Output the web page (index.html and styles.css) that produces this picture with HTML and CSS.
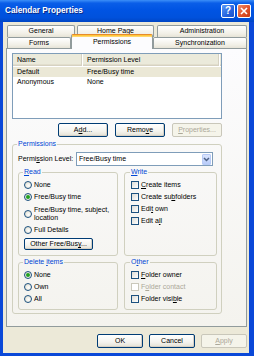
FILE: index.html
```html
<!DOCTYPE html>
<html lang="en">
<head>
<meta charset="UTF-8">
<title>Calendar Properties</title>
<link rel="stylesheet" href="styles.css">
</head>
<body>

<div class="window">
    <div class="titlebar">
        <span class="title">Calendar Properties</span>
        <span class="cap-btn help-btn">?</span>
        <span class="cap-btn close-btn">
            <svg width="8" height="8" viewBox="0 0 8 8"><path d="M1 1 L7 7 M7 1 L1 7" stroke="#fff" stroke-width="1.6"/></svg>
        </span>
    </div>

    <div class="frame">
        <div class="tab-row back-row">
            <div class="tab tab-general">General</div>
            <div class="tab tab-home">Home Page</div>
            <div class="tab tab-admin">Administration</div>
        </div>
        <div class="tab-row">
            <div class="tab tab-forms">Forms</div>
            <div class="tab tab-perm active">Permissions</div>
            <div class="tab tab-sync">Synchronization</div>
        </div>

        <div class="panel">
            <div class="listview">
                <div class="lv-head">
                    <span class="col-name">Name</span>
                    <span class="col-level">Permission Level</span>
                </div>
                <div class="lv-row selected">
                    <span class="col-name">Default</span>
                    <span class="col-level">Free/Busy time</span>
                </div>
                <div class="lv-row">
                    <span class="col-name">Anonymous</span>
                    <span class="col-level">None</span>
                </div>
            </div>

            <div class="btn-row">
                <button class="btn">A<u>d</u>d...</button>
                <button class="btn">Remo<u>v</u>e</button>
                <button class="btn" disabled><u>P</u>roperties...</button>
            </div>

            <fieldset class="group outer">
                <legend>Permissions</legend>
                <div class="level-row">
                    <span class="level-label">Permi<u>s</u>sion Level:</span>
                    <div class="combo">
                        <span class="combo-text">Free/Busy time</span>
                        <span class="combo-btn">
                            <svg width="7" height="5" viewBox="0 0 7 5"><path d="M1 1 L3.5 3.5 L6 1" stroke="#4d6185" stroke-width="1.5" fill="none"/></svg>
                        </span>
                    </div>
                </div>

                <div class="sub-grid">
                    <fieldset class="group">
                        <legend><u>R</u>ead</legend>
                        <div class="item"><span class="radio"></span><span>None</span></div>
                        <div class="item"><span class="radio checked"></span><span>Free/Busy time</span></div>
                        <div class="item two-line"><span class="radio"></span><span>Free/Busy time, subject,<br>location</span></div>
                        <div class="item"><span class="radio"></span><span>Full Details</span></div>
                        <button class="btn btn-other">Other Free/Bus<u>y</u>...</button>
                    </fieldset>

                    <fieldset class="group">
                        <legend><u>W</u>rite</legend>
                        <div class="item"><span class="check"></span><span><u>C</u>reate items</span></div>
                        <div class="item"><span class="check"></span><span>Create su<u>b</u>folders</span></div>
                        <div class="item"><span class="check"></span><span>Edi<u>t</u> own</span></div>
                        <div class="item"><span class="check"></span><span>Edit a<u>l</u>l</span></div>
                    </fieldset>

                    <fieldset class="group">
                        <legend>Delete <u>i</u>tems</legend>
                        <div class="item"><span class="radio checked"></span><span>None</span></div>
                        <div class="item"><span class="radio"></span><span>Own</span></div>
                        <div class="item"><span class="radio"></span><span>All</span></div>
                    </fieldset>

                    <fieldset class="group">
                        <legend>O<u>t</u>her</legend>
                        <div class="item"><span class="check"></span><span><u>F</u>older owner</span></div>
                        <div class="item disabled"><span class="check"></span><span>F<u>o</u>lder contact</span></div>
                        <div class="item"><span class="check"></span><span>Folder visi<u>b</u>le</span></div>
                    </fieldset>
                </div>
            </fieldset>
        </div>

        <div class="dlg-buttons">
            <button class="btn btn-dlg">OK</button>
            <button class="btn btn-dlg">Cancel</button>
            <button class="btn btn-dlg" disabled><u>A</u>pply</button>
        </div>
    </div>
</div>

</body>
</html>
```

FILE: styles.css
```css
* {
    box-sizing: border-box;
}

body {
    margin: 0;
    font-family: "Liberation Sans", Arial, sans-serif;
    font-size: 7px;
    line-height: 8px;
    color: #000;
    background: #fff;
}

.window {
    width: 254px;
    height: 356px;
    display: flex;
    flex-direction: column;
}

/* title bar */
.titlebar {
    height: 22px;
    display: flex;
    align-items: center;
    padding: 0 3px 0 5px;
    background: linear-gradient(to bottom, #3c8ff8 0%, #0a5ee8 14%, #0054e3 45%, #0051dc 80%, #0046c4 100%);
}

.title {
    flex: 1;
    color: #fff;
    font-weight: bold;
    font-size: 8.2px;
    text-shadow: 1px 1px 0 #0a2a8a;
    margin-top: -1px;
}

.cap-btn {
    width: 14px;
    height: 14px;
    border: 1px solid #fff;
    border-radius: 2px;
    display: flex;
    align-items: center;
    justify-content: center;
    color: #fff;
    font-weight: bold;
    font-size: 10px;
    margin-top: -1px;
}

.help-btn {
    background: linear-gradient(135deg, #5c9bfa, #2663de 60%, #1c52c8);
    margin-right: 2px;
}

.close-btn {
    background: linear-gradient(135deg, #ec8d6b, #e0522a 55%, #c63a12);
}

/* window body */
.frame {
    flex: 1;
    background: #ece9d8;
    border-left: 3px solid #0a48d8;
    border-right: 5px solid #0a48d8;
    border-bottom: 3px solid #0a48d8;
    padding: 3px 0 0 3px;
}

/* tabs */
.tab-row {
    display: flex;
    align-items: flex-start;
    margin-left: 1px;
}

.tab {
    text-align: center;
    border: 1px solid #919b9c;
    border-bottom: none;
    border-radius: 2px 2px 0 0;
    background: linear-gradient(#fff, #f1efe6 70%, #e6e3d6);
}

.back-row .tab {
    height: 12px;
    line-height: 10px;
}

.tab-general { width: 68px; margin-right: 2px; }
.tab-home { width: 77px; margin-right: 3px; }
.tab-admin { width: 90px; }

.tab-forms, .tab-sync {
    height: 11px;
    line-height: 10px;
}

.tab-forms { width: 64px; }
.tab-sync { width: 94px; }

.tab-perm {
    width: 82px;
    height: 15px;
    line-height: 13px;
    margin-top: -3px;
    margin-bottom: -1px;
    position: relative;
    z-index: 1;
    background: #fcfcfe;
    border-top: 1px solid #e68b2c;
    box-shadow: inset 0 1px 0 #ffc83c, inset 0 2px 0 #ffd76e;
}

.panel {
    width: 241px;
    height: 279px;
    border: 1px solid #919b9c;
    background: linear-gradient(#fcfcfe, #f4f3ee);
    padding: 4px 0 0 5px;
}

/* list view */
.listview {
    width: 210px;
    height: 66px;
    border: 1px solid #7f9db9;
    background: #fff;
}

.lv-head {
    height: 12px;
    display: flex;
    background: #ebeadb;
    box-shadow: inset 0 -1px 0 #d6d2c2, inset 0 -2px 0 #e2decd;
}

.lv-head span {
    line-height: 11px;
    border-right: 1px solid #d6d2c2;
    box-shadow: 1px 0 0 #fff;
}

.col-name {
    width: 69px;
    padding-left: 4px;
}

.col-level {
    width: 137px;
    padding-left: 5px;
}

.lv-row {
    display: flex;
    height: 10px;
    line-height: 10px;
}

.lv-row:nth-child(2) {
    margin-top: 1px;
}

.lv-row.selected {
    background: #ebe8d6;
}

/* buttons */
.btn {
    font: inherit;
    color: #000;
    height: 14px;
    padding: 0;
    border: 1px solid #003c74;
    border-radius: 2px;
    background: linear-gradient(#fff, #f4f3ee 60%, #e3e0d3);
    box-shadow: inset -1px -1px 0 #d6d0c5;
}

.btn:disabled {
    color: #aca899;
    border-color: #c9c7ba;
    background: #f5f4ea;
    box-shadow: none;
}

.btn-row {
    width: 210px;
    display: flex;
    justify-content: flex-end;
    gap: 7px;
    margin-top: 4px;
}

.btn-row .btn {
    width: 50px;
}

/* group boxes */
.group {
    margin: 0;
    border: 1px solid #d0d0bf;
    border-radius: 3px;
    min-width: 0;
}

.group legend {
    color: #0046d5;
    padding: 0 1px;
    margin-left: -1px;
    line-height: 8px;
}

.outer {
    width: 210px;
    margin-top: 3px;
    padding: 4px 8px 3px 5px;
}

.level-row {
    display: flex;
    align-items: center;
    height: 14px;
}

.level-label {
    width: 58px;
}

.combo {
    width: 137px;
    height: 14px;
    border: 1px solid #7f9db9;
    background: #fff;
    display: flex;
    align-items: center;
    padding: 0 1px 0 2px;
}

.combo-text {
    flex: 1;
}

.combo-btn {
    width: 9px;
    height: 11px;
    border: 1px solid #b8cbf6;
    border-radius: 1px;
    background: linear-gradient(#dbe5fd, #b8cbf9);
    display: flex;
    align-items: center;
    justify-content: center;
}

.sub-grid {
    display: grid;
    grid-template-columns: 100px 93px;
    column-gap: 6px;
    row-gap: 2px;
    margin-top: 2px;
}

.sub-grid .group {
    padding: 3px 4px 4px 5px;
}

.sub-grid .group:nth-child(even) {
    padding-left: 6px;
}

.sub-grid .group:first-child {
    padding-bottom: 5px;
}

.item {
    display: flex;
    align-items: center;
    gap: 2px;
    height: 12px;
}

.item.two-line {
    height: 21px;
    padding-top: 1px;
}

.item.disabled {
    color: #aca899;
}

.radio {
    width: 8px;
    height: 8px;
    border: 1px solid #1c5180;
    border-radius: 50%;
    background: radial-gradient(circle at 60% 60%, #fff, #dcd9c7);
    display: flex;
    align-items: center;
    justify-content: center;
    flex-shrink: 0;
}

.radio.checked::after {
    content: "";
    width: 4px;
    height: 4px;
    border-radius: 50%;
    background: #21a121;
}

.check {
    width: 8px;
    height: 8px;
    border: 1px solid #1c5180;
    background: linear-gradient(135deg, #dcdcd7, #fff);
    flex-shrink: 0;
}

.item.disabled .check {
    border-color: #cac8bb;
    background: #fff;
}

.btn-other {
    width: 69px;
    height: 12px;
    margin-top: 2px;
}

/* dialog buttons */
.dlg-buttons {
    width: 241px;
    display: flex;
    justify-content: flex-end;
    gap: 6px;
    margin-top: 7px;
}

.btn-dlg {
    width: 46px;
}
```
